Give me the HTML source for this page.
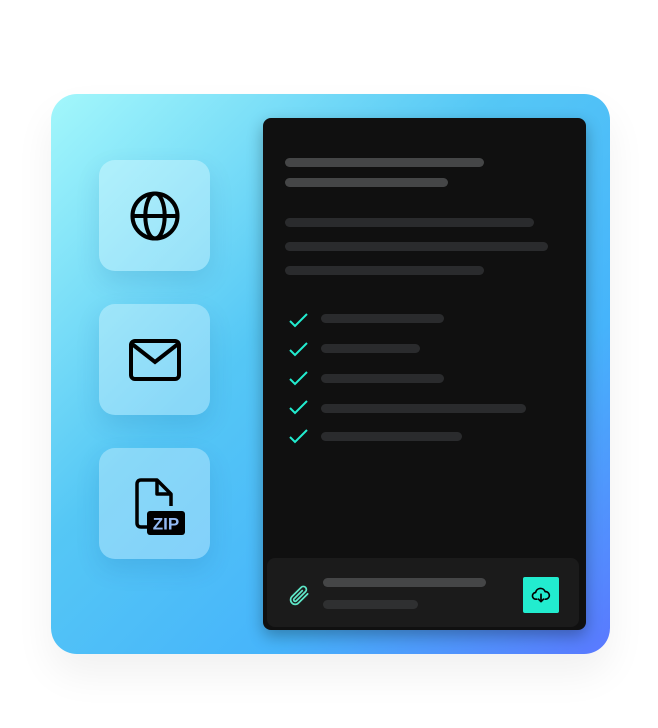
<!DOCTYPE html><html><head><style>
body{margin:0;width:658px;height:728px;background:#fff;position:relative;overflow:hidden;font-family:"Liberation Sans",sans-serif}
.card{position:absolute;left:51px;top:94px;width:559px;height:560px;border-radius:26px;background:linear-gradient(135deg,#a3f7fb 0%,#55c7f5 40%,#46b4fb 70%,#5a78ff 100%);box-shadow:0 20px 40px rgba(0,0,0,0.06)}
.tile{position:absolute;left:99px;width:111px;height:111px;border-radius:16px;background:rgba(255,255,255,0.3);box-shadow:0 10px 25px rgba(0,60,120,0.12);display:flex;align-items:center;justify-content:center}
.panel{position:absolute;left:263px;top:118px;width:323px;height:512px;border-radius:8px;background:#101010;box-shadow:0 6px 16px rgba(0,0,0,0.3)}
.bar{position:absolute;height:9px;border-radius:5px;background:#2a2b2d}
.b1{background:#454647}
.ck{position:absolute;left:289px}
.strip{position:absolute;left:267px;top:558px;width:312px;height:69px;border-radius:8px;background:#1b1b1b}
.btn{position:absolute;left:523px;top:577px;width:36px;height:36px;border-radius:2px;background:#22eccf;display:flex;align-items:center;justify-content:center}
</style></head><body>
<div class="card"></div>
<div class="tile" style="top:160px"><svg width="54" height="54" viewBox="0 0 24 24" fill="none" stroke="#000" stroke-width="1.8"><circle cx="12" cy="12" r="10"/><ellipse cx="12" cy="12" rx="4.3" ry="10"/><path d="M2 12h20"/></svg></div>
<div class="tile" style="top:304px"><svg width="54" height="44" viewBox="0 0 27 22" fill="none" stroke="#000" stroke-width="2"><rect x="1.5" y="1.5" width="24" height="19" rx="2"/><path d="M2 3l11.5 9L25 3"/></svg></div>
<div class="tile" style="top:448px"><svg width="60" height="66" viewBox="0 0 60 66"><path d="M16 9h16l14 14v12M16 9c-3 0-4 2-4 4v39c0 3 2 4 4 4h6" fill="none" stroke="#000" stroke-width="3.5" stroke-linejoin="round"/><path d="M32 9v14h14" fill="none" stroke="#000" stroke-width="3.5" stroke-linejoin="round"/><rect x="22" y="40" width="38" height="24" rx="3" fill="#000"/><text x="41" y="58.5" text-anchor="middle" font-family="Liberation Sans" font-weight="bold" font-size="17" fill="#93b9f3">ZIP</text></svg></div>
<div class="panel"></div>
<div class="bar b1" style="left:285px;top:158px;width:199px"></div>
<div class="bar b1" style="left:285px;top:178px;width:163px"></div>
<div class="bar" style="left:285px;top:218px;width:249px"></div>
<div class="bar" style="left:285px;top:242px;width:263px"></div>
<div class="bar" style="left:285px;top:266px;width:199px"></div>
<svg class="ck" style="top:313px" width="20" height="16" viewBox="0 0 20 16"><path d="M1 8l5 5L18 1" fill="none" stroke="#22eccf" stroke-width="2"/></svg>
<div class="bar" style="left:321px;top:314px;width:123px"></div>
<svg class="ck" style="top:342px" width="20" height="16" viewBox="0 0 20 16"><path d="M1 8l5 5L18 1" fill="none" stroke="#22eccf" stroke-width="2"/></svg>
<div class="bar" style="left:321px;top:344px;width:99px"></div>
<svg class="ck" style="top:371px" width="20" height="16" viewBox="0 0 20 16"><path d="M1 8l5 5L18 1" fill="none" stroke="#22eccf" stroke-width="2"/></svg>
<div class="bar" style="left:321px;top:374px;width:123px"></div>
<svg class="ck" style="top:400px" width="20" height="16" viewBox="0 0 20 16"><path d="M1 8l5 5L18 1" fill="none" stroke="#22eccf" stroke-width="2"/></svg>
<div class="bar" style="left:321px;top:404px;width:205px"></div>
<svg class="ck" style="top:429px" width="20" height="16" viewBox="0 0 20 16"><path d="M1 8l5 5L18 1" fill="none" stroke="#22eccf" stroke-width="2"/></svg>
<div class="bar" style="left:321px;top:432px;width:141px"></div>
<div class="strip"></div>
<svg style="position:absolute;left:286px;top:583px" width="26" height="26" viewBox="0 0 24 24" fill="none" stroke="#5ee8c8" stroke-width="1.6" stroke-linecap="round"><path d="M20 10l-8.5 8.5a4.2 4.2 0 0 1-6-6L14 4a2.8 2.8 0 0 1 4 4l-8.5 8.5a1.4 1.4 0 0 1-2-2L15 7"/></svg>
<div class="bar" style="left:323px;top:578px;width:163px;background:#454647"></div>
<div class="bar" style="left:323px;top:600px;width:95px;background:#2f3031"></div>
<div class="btn"><svg width="20" height="20" viewBox="0 0 24 24" fill="none" stroke="#000" stroke-width="2" stroke-linecap="round" stroke-linejoin="round"><path d="M7 17H6a4 4 0 0 1-.5-8A6 6 0 0 1 17 8a4.5 4.5 0 0 1 1 9h-1"/><path d="M12 11v9M9 17l3 3 3-3"/></svg></div>
</body></html>
